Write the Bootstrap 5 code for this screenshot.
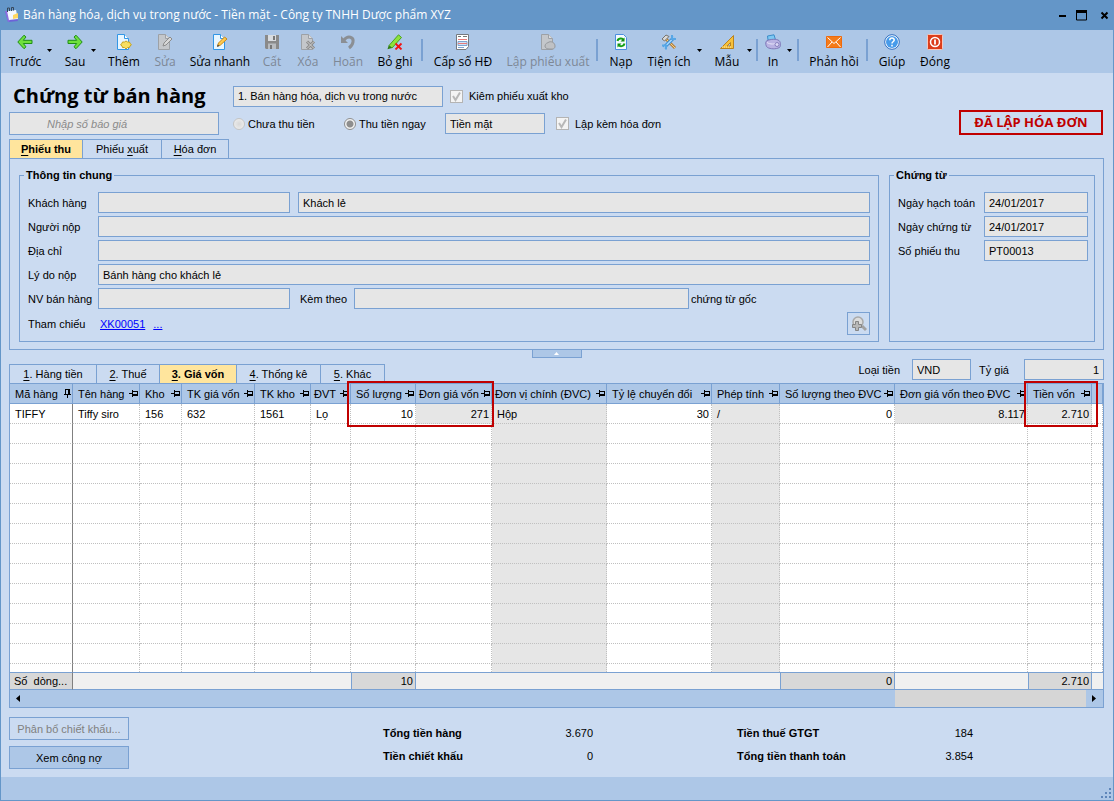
<!DOCTYPE html>
<html lang="vi">
<head>
<meta charset="utf-8">
<meta name="viewport" content="width=device-width, initial-scale=1">
<title>Bán hàng hóa, dịch vụ trong nước</title>
<link rel="stylesheet" href="https://cdn.jsdelivr.net/npm/bootstrap@5.3.0/dist/css/bootstrap.min.css">
<style>
:root { --line:#7aa1d2; --frame:#6496c8; --bar:#adc7e7; --page:#cbdbf1; --field:#e6e6e6; --mark-red:#c00000; --active:#ffe59d; }
body { background:var(--page); color:#000; font:11px/14px "Liberation Sans", Arial, sans-serif; }
.ui-font { font-family:"Open Sans", "Segoe UI", sans-serif; font-size:12px; line-height:16px; }
button, input, select { font:inherit; color:inherit; border-radius:0; }
.app-window { border:1px solid var(--frame); border-top:0; }
.title-bar { background:var(--frame); color:#fff; height:30px; padding:0 4px; }
.title-bar button { background:none; border:0; padding:0; display:block; color:#000; line-height:0; }
.tool-bar { background:var(--bar); height:43px; padding:4px 0 3px 2px; display:grid; align-items:start;
  grid-template-columns:44px 12px 32px 12px 42px 40px 70px 34px 38px 42px 52px 2px 80px 90px 8px 40px 56px 10px 40px 8px 4px 28px 6px 10px 62px 4px 46px 40px; }
.tool-bar button { background:none; border:0; padding:0; display:flex; flex-direction:column; align-items:center; gap:4px; white-space:nowrap; color:#000; min-width:0; }
.tool-bar button:disabled { color:#7d8896; }
.tool-bar .drop { display:block; padding-top:15px; line-height:0; text-align:left; }
.tool-bar i { width:2px; height:22px; margin-top:5px; background:var(--line); justify-self:center; }
main { padding:12px 9px 8px 8px; }
.doc-title { font:700 20px/22px "Open Sans", "Segoe UI", sans-serif; padding-left:4px; margin:0; white-space:nowrap; }
.head-row { display:grid; align-items:center; grid-template-columns:224px 210px auto; }
.head-row.second { grid-template-columns:224px 111px 101px 100px auto; padding-top:5px; }
.head-row label { display:flex; align-items:center; white-space:nowrap; }
.pick-tick { gap:6px; padding-left:7px; }
.second .pick-tick { padding-left:11px; }
.pick-dot { gap:3px; }
.field { background:var(--field); border:1px solid var(--line); height:21px; padding:0 4px; min-width:0; appearance:none; outline:0; display:block; opacity:1; color:#000; }
.field.flex-fill { width:0; }
.field.quote { height:23px; width:210px; padding-left:37px; font-style:italic; }
.field.quote::placeholder { color:#8a8a8a; opacity:1; }
.tick, .dot { appearance:none; width:13px; height:13px; margin:0; border:1px solid #b4b4b4; background:#f4f4f4; }
.tick:checked { background:#f4f4f4 url("data:image/svg+xml,%3Csvg xmlns='http://www.w3.org/2000/svg' viewBox='0 0 11 11'%3E%3Cpath d='M2 5l2.500 4L9 1.500' fill='none' stroke='%23b8b8b8' stroke-width='2'/%3E%3C/svg%3E") center/11px no-repeat; }
.dot { width:12px; height:12px; border-radius:50%; border-color:#c4c4c4; background:radial-gradient(#d8d8d8,#f2f2f2); }
.dot:checked { border-color:#8f8f8f; background:radial-gradient(circle,#8e8e8e 0 3px,#f2f2f2 4px); }
.stamp { border:2px solid var(--mark-red); color:var(--mark-red); font:700 13px/21px "Open Sans", "Segoe UI", sans-serif; width:144px; text-align:center; white-space:nowrap; margin:25px 1px 0 0; }
.tab-strip button { background:var(--page); border:1px solid var(--line); border-bottom:0; border-left-width:0; padding:0; height:19px; color:#000; }
.tab-strip button:first-child { border-left-width:1px; }
.tab-strip .active { background:var(--active); font-weight:700; }
.tab-strip u { text-underline-offset:2px; }
.t64 { width:64px; } .t67 { width:67px; } .t74 { width:74px; } .t77 { width:77px; } .t79 { width:79px; } .t84 { width:84px; } .t88 { width:88px; } .t63 { width:63px; }
.panel { border:1px solid var(--line); padding:9px 8px 7px 9px; gap:10px; }
fieldset { border:1px solid var(--line); padding:9px 8px 6px; }
fieldset legend { float:none; width:auto; font:inherit; font-weight:700; line-height:14px; padding:0 2px; margin:0 0 1px -4px; }
.group-doc { flex:0 0 206px; padding-right:6px; }
.f-lines { display:grid; gap:3px; }
.f-line { display:flex; align-items:center; min-height:21px; white-space:nowrap; }
.f-line > label:first-child, .f-line > .lead-text { width:70px; flex:none; }
.f-line > .lead-text { width:72px; }
.group-doc .f-line > label:first-child { width:86px; }
.w-code { width:192px; flex:none; }
.with-label { width:64px; padding-left:10px; flex:none; }
.after-label { width:181px; padding-left:2px; flex:none; }
.link-blue { color:#00f; }
.find-btn { width:23px; height:23px; background:none; border:1px solid var(--line); padding:0; line-height:0; }
.fold { width:50px; height:8px; background:var(--bar); border:1px solid var(--line); border-top:0; padding:0; line-height:0; display:block; margin:0 auto; }
.money { padding:1px 0 3px; white-space:nowrap; }
.cur-w { width:59px; margin:0 8px 0 12px; }
.rate-w { width:80px; margin-left:15px; }
.grid-box { border:1px solid var(--line); background:#fff; }
.data-grid { table-layout:fixed; width:100%; border-collapse:separate; border-spacing:0; white-space:nowrap; }
.data-grid th, .data-grid td { padding:0 2px 0 5px; border-right:1px dotted #c0c0c0; border-bottom:1px dotted #c0c0c0; height:20px; overflow:hidden; }
.data-grid thead th { background:var(--bar); font-weight:400; border-right:1px solid var(--line); border-bottom:1px solid var(--line); padding-right:1px; position:relative; overflow:visible; }
.data-grid thead .tight { padding-left:3px; }
.data-grid .num { text-align:right; }
.data-grid .gray { background:var(--field); }
.data-grid tr > :first-child { border-right:1px solid #808080; }
.data-grid thead tr > :first-child { border-right-color:var(--line); }
.data-grid .stub td { height:8px; border-bottom:0; }
.data-grid tfoot td { height:18px; background:#f0f0f0; border:0; border-top:1px solid var(--line); border-bottom:1px solid var(--line); padding:0 2px; }
.data-grid tfoot .sum { background:#d8d8d8; border-right:1px solid var(--line); border-left:1px solid var(--line); }
.data-grid tfoot tr > .count { border-left:0; border-right:1px solid #808080; white-space:pre; padding-left:4px; }
.red-box { position:absolute; top:-3px; left:-4px; height:46px; border:2px solid var(--mark-red); z-index:2; }
.red-wide { width:147px; } .red-slim { width:74px; }
.scroll-line { height:17px; background:var(--bar); display:flex; align-items:center; justify-content:space-between; padding:0 6px 0 5px; }
.scroll-line .track { flex:0 0 191px; align-self:stretch; background:#d6d6d6; margin:0 6px 0 auto; }
.foot-area { padding-top:9px; }
.foot-btns { gap:6px; }
.btn-flat { width:120px; height:23px; background:var(--bar); border:1px solid var(--line); padding:0; color:#000; }
.btn-flat:disabled { background:var(--page); color:#808080; }
.totals { display:grid; grid-template-columns:150px 60px 320px 60px; row-gap:9px; align-content:start; margin-left:254px; padding-top:9px; flex:none; }
.totals dt, .totals dd { margin:0; white-space:nowrap; }
.totals dd { text-align:right; }
.totals .far { padding-left:144px; }
.status-bar { background:var(--bar); height:23px; padding:0 1px 1px; }
</style>
</head>
<body>
<svg width="0" height="0" class="position-absolute" aria-hidden="true">
  <symbol id="pin" viewBox="0 0 9 7"><path d="M0 3.500h3M3.500 0v7M8.500 1v5M4 1.500h4.500" stroke="#000" fill="none"/><path d="M4 4h5v2H4z"/></symbol>
  <symbol id="pin-down" viewBox="0 0 7 9"><path d="M1 .5h5M1.500 1v5M0 5.500h7M3.500 6v3" stroke="#000" fill="none"/><path d="M4 0h2v6H4z"/></symbol>
  <symbol id="caret" viewBox="0 0 5 3"><path d="M0 0h5L2.500 3z"/></symbol>
  <symbol id="sheet-blue" viewBox="0 0 16 16"><path d="M1.500.5h7l4 4v11h-11z" fill="#e8f6ff" stroke="#3296e6"/><path d="M8.500.5v4h4" fill="#fff" stroke="#3296e6"/></symbol>
  <symbol id="sheet-gray" viewBox="0 0 16 16"><path d="M1.500.5h7l4 4v11h-11z" fill="#c4c7cb" stroke="#9da1a6"/><path d="M8.500.5v4h4" fill="#dcdcdc" stroke="#9da1a6"/></symbol>
</svg>

<div class="app-window d-flex flex-column min-vh-100">
  <header class="title-bar ui-font d-flex align-items-center">
    <svg width="14" height="16" viewBox="0 0 14 16" class="me-1" aria-hidden="true"><path d="M0 4l3 11 10-1-1-3z" fill="#6d62d8"/><path d="M0 4l3 11 2-1L3 4z" fill="#8a6fe0"/><path d="M2 4l9-1 2 9-9 1z" fill="#f3f8ff"/><path d="M8 8l5-2v5l-5 1z" fill="#ffd860"/><path d="M2.500 5V1h2v3M6.500 4V.5h2v3" fill="none" stroke="#37475a"/></svg>
    <span class="me-auto">Bán hàng hóa, dịch vụ trong nước - Tiền mặt - Công ty TNHH Dược phẩm XYZ</span>
    <div class="d-flex align-items-center gap-2">
      <button type="button" aria-label="Thu nhỏ"><svg width="9" height="11" viewBox="0 0 9 11"><path d="M1 5h7v2H1z"/></svg></button>
      <button type="button" aria-label="Phóng to"><svg width="13" height="11" viewBox="0 0 13 11"><path d="M1.500 1v9h10V1z" fill="none" stroke="#000"/><path d="M1 0h11v3H1z"/></svg></button>
      <button type="button" aria-label="Đóng cửa sổ" class="ms-1"><svg width="9" height="11" viewBox="0 0 9 11"><path d="M1.500 2.500l6 6m0-6l-6 6" stroke="#000" stroke-width="2"/></svg></button>
    </div>
  </header>

  <nav class="tool-bar ui-font" aria-label="Công cụ">
    <button type="button"><svg width="16" height="16" viewBox="0 0 16 16"><path d="M7 1.200L9 3 6.300 6.300H15v3.200H6.300L9 12.800 7 14.700.8 8z" fill="#6fe03c" stroke="#1f8f17"/></svg>Trước</button>
    <button type="button" class="drop" aria-label="Danh sách trước"><svg width="5" height="3"><use href="#caret"/></svg></button>
    <button type="button"><svg width="16" height="16" viewBox="0 0 16 16"><path d="M9 1.200L7 3l2.700 3.300H1v3.200h8.700L7 12.800l2 1.900L15.200 8z" fill="#6fe03c" stroke="#1f8f17"/></svg>Sau</button>
    <button type="button" class="drop" aria-label="Danh sách sau"><svg width="5" height="3"><use href="#caret"/></svg></button>
    <button type="button"><svg width="16" height="16" viewBox="0 0 16 16"><use href="#sheet-blue"/><path d="M10 7l1.500 1h2l.5 1.500 1.500 1.200-1.500 1.300-.5 1.500h-2L10 15l-1.500-1.500h-2L6 12l-1.500-1.300L6 9.500 6.500 8h2z" fill="#f7df62" stroke="#c8a31c"/></svg>Thêm</button>
    <button type="button" disabled><svg width="16" height="16" viewBox="0 0 16 16"><use href="#sheet-gray"/><path d="M6 12l1-3 6-6 2 2-6 6z" fill="#d8d8d8" stroke="#8c8c8c"/></svg>Sửa</button>
    <button type="button"><svg width="16" height="16" viewBox="0 0 16 16"><use href="#sheet-blue"/><path d="M5.500 12l1-3 6-6 2.500 2-6.500 6z" fill="#ffc94d" stroke="#c98a1a"/><path d="M5 13l.8-2.500L7.500 12z" fill="#444"/></svg>Sửa nhanh</button>
    <button type="button" disabled><svg width="16" height="16" viewBox="0 0 16 16"><path d="M1 1h14v14H2l-1-1z" fill="#8a8a8a"/><path d="M4 1h8v6H4z" fill="#d9dce0"/><path d="M4 9.500h8V15H4z" fill="#b9bcc0"/><path d="M6 11h2v4H6zM9 2h2v4H9z" fill="#777"/></svg>Cất</button>
    <button type="button" disabled><svg width="16" height="16" viewBox="0 0 16 16"><use href="#sheet-gray"/><path d="M7 7.500l7 7m0-7l-7 7" stroke="#8a8a8a" stroke-width="3"/><path d="M7 7.500l7 7m0-7l-7 7" stroke="#d2d2d2"/></svg>Xóa</button>
    <button type="button" disabled><svg width="16" height="16" viewBox="0 0 16 16"><path d="M4 6c4-5 10-3 9 2-.5 3-2 4.500-4 6" fill="none" stroke="#8b8f94" stroke-width="3"/><path d="M1 2v7h7z" fill="#8b8f94"/></svg>Hoãn</button>
    <button type="button"><svg width="16" height="16" viewBox="0 0 16 16"><path d="M2 11.500L11.500.8l3 2.700L5 14z" fill="#8ee23c" stroke="#4ba31f"/><path d="M.5 15.200l1.200-4L5 14z" fill="#2f7d16"/><path d="M8.500 9.500l6 6m0-6l-6 6" stroke="#f01414" stroke-width="1.800"/></svg>Bỏ ghi</button>
    <i></i>
    <button type="button"><svg width="16" height="16" viewBox="0 0 16 16"><path d="M1.500.5h12v12l-2.500 3H1.500z" fill="#fff" stroke="#75797f"/><path d="M3 2.500h3M8 2.500h4" stroke="#777"/><path d="M3 5.500h9" stroke="#e87a7a"/><path d="M3 7.500h9v4H3z" fill="#cfe4f7" stroke="#7fa3cf"/><path d="M3 9.500h9" stroke="#e87a7a"/><path d="M3 13.500h6" stroke="#7fa3cf"/></svg>Cấp số HĐ</button>
    <button type="button" disabled><svg width="16" height="16" viewBox="0 0 16 16"><use href="#sheet-gray"/><path d="M5 12c0-3 3-3 4-4 3-1 6 1 6 4s-2 3-4 3-6 0-6-3z" fill="#bfc1c4" stroke="#96999d"/></svg>Lập phiếu xuất</button>
    <i></i>
    <button type="button"><svg width="16" height="16" viewBox="0 0 16 16"><path d="M2.500.5h8l3 3v12h-11z" fill="#f4fbff" stroke="#4b8ee0"/><path d="M4.500 7c.5-3 5-3.500 6-1" fill="none" stroke="#16a016" stroke-width="2"/><path d="M11.500 3.500v4h-4zM4.500 13.500v-4h4z" fill="#118c11"/><path d="M11.500 9.500c-.5 3-4.500 3.500-6 1.500" fill="none" stroke="#16a016" stroke-width="2"/></svg>Nạp</button>
    <button type="button"><svg width="16" height="16" viewBox="0 0 16 16"><path d="M4 4l10 10" stroke="#b8823a" stroke-width="3"/><path d="M5 5l9 9" stroke="#f3d18e"/><path d="M1 5l4-4 3 1.500L3.500 7z" fill="#d9d9d9" stroke="#76746e"/><path d="M3 13.500L13 3.500" stroke="#3d8fd6" stroke-width="3.500"/><path d="M3 13.500L13 3.500" stroke="#a9dbff" stroke-width="1.500"/><path d="M11 1v4h4M1 11.500h4v4" fill="none" stroke="#58a7e6" stroke-width="2"/></svg>Tiện ích</button>
    <button type="button" class="drop" aria-label="Danh sách tiện ích"><svg width="5" height="3"><use href="#caret"/></svg></button>
    <button type="button"><svg width="16" height="16" viewBox="0 0 16 16"><path d="M14.500 1.500v13h-13z" fill="#f6c13c" stroke="#b9821f"/><path d="M11.500 8.500v3.500H8z" fill="#adc7e7" stroke="#b9821f"/><path d="M3 13h10" stroke="#fde9a8" stroke-dasharray="1 1"/></svg>Mẫu</button>
    <button type="button" class="drop" aria-label="Danh sách mẫu"><svg width="5" height="3"><use href="#caret"/></svg></button>
    <i></i>
    <button type="button"><svg width="16" height="16" viewBox="0 0 16 16"><path d="M3 6L2.500 2 9 .8l1.500 5z" fill="#7ec8f2" stroke="#3c8cc8"/><path d="M1 7.500c2-2 9-3 12-1.500 3 1 3 6 1.500 7.500-4 2-9 1.500-12 0C.5 12 .5 9 1 7.500z" fill="#b9b3e3" stroke="#7f79b8"/><path d="M2 8.500c3 2 8 2 10 0" fill="none" stroke="#e9e6fa"/><circle cx="12" cy="10.500" r="2" fill="#dcd8f5" stroke="#8580bd"/></svg>In</button>
    <button type="button" class="drop" aria-label="Danh sách in"><svg width="5" height="3"><use href="#caret"/></svg></button>
    <i></i>
    <button type="button"><svg width="16" height="16" viewBox="0 0 16 16"><path d="M.5 2.500h15v11H.5z" fill="#f47b1a" stroke="#ef6a0c"/><path d="M1.500 3.500L8 9.500l6.500-6M1.500 13L6 8m8.500 5L10 8" fill="none" stroke="#fff"/></svg>Phản hồi</button>
    <i></i>
    <button type="button"><svg width="16" height="16" viewBox="0 0 16 16"><circle cx="8" cy="8" r="7.300" fill="#fff" stroke="#2c6cc0"/><circle cx="8" cy="8" r="6" fill="#479bea"/><path d="M5.800 6.200c.2-3 4.600-2.700 4.400 0-.2 1.600-2.200 1.600-2.200 3.200M8 10.800v1.700" fill="none" stroke="#fff" stroke-width="1.500"/></svg>Giúp</button>
    <button type="button"><svg width="16" height="16" viewBox="0 0 16 16"><rect x=".5" y=".5" width="15" height="15" rx="1" fill="#dc3d1b" stroke="#f7c7bb"/><circle cx="8" cy="8" r="4.500" fill="none" stroke="#fff" stroke-width="1.500"/><path d="M8 5.500v5" stroke="#fff" stroke-width="1.800"/></svg>Đóng</button>
  </nav>

  <main class="flex-grow-1 d-flex flex-column">
    <div class="d-flex align-items-start">
      <div class="flex-grow-1">
        <div class="head-row">
          <h1 class="doc-title">Chứng từ bán hàng</h1>
          <select class="field" aria-label="Loại chứng từ" disabled><option>1. Bán hàng hóa, dịch vụ trong nước</option></select>
          <label class="pick-tick"><input type="checkbox" class="tick" checked disabled>Kiêm phiếu xuất kho</label>
        </div>
        <div class="head-row second">
          <input type="text" class="field quote" placeholder="Nhập số báo giá" aria-label="Số báo giá" readonly>
          <label class="pick-dot"><input type="radio" name="pay" class="dot" disabled>Chưa thu tiền</label>
          <label class="pick-dot"><input type="radio" name="pay" class="dot" checked disabled>Thu tiền ngay</label>
          <select class="field" aria-label="Phương thức" disabled><option>Tiền mặt</option></select>
          <label class="pick-tick"><input type="checkbox" class="tick" checked disabled>Lập kèm hóa đơn</label>
        </div>
      </div>
      <div class="stamp">ĐÃ LẬP HÓA ĐƠN</div>
    </div>

    <div class="tab-strip d-flex pt-1">
      <button type="button" class="active t74"><u>P</u>hiếu thu</button>
      <button type="button" class="t79">Phiếu <u>x</u>uất</button>
      <button type="button" class="t67"><u>H</u>óa đơn</button>
    </div>
    <section class="panel d-flex">
      <fieldset class="flex-grow-1">
        <legend>Thông tin chung</legend>
        <div class="f-lines">
          <div class="f-line"><label for="kh">Khách hàng</label><input id="kh" class="field w-code" readonly><input class="field flex-fill ms-2" value="Khách lẻ" aria-label="Tên khách hàng" readonly></div>
          <div class="f-line"><label for="nn">Người nộp</label><input id="nn" class="field flex-fill" readonly></div>
          <div class="f-line"><label for="dc">Địa chỉ</label><input id="dc" class="field flex-fill" readonly></div>
          <div class="f-line"><label for="ld">Lý do nộp</label><input id="ld" class="field flex-fill" value="Bánh hàng cho khách lẻ" readonly></div>
          <div class="f-line"><label for="nv">NV bán hàng</label><input id="nv" class="field w-code" readonly><label for="kt" class="with-label">Kèm theo</label><input id="kt" class="field flex-fill" readonly><label for="kt" class="after-label">chứng từ gốc</label></div>
          <div class="f-line"><span class="lead-text">Tham chiếu</span><a href="#" class="link-blue">XK00051</a><a href="#" class="link-blue ms-2">...</a>
            <button type="button" class="find-btn ms-auto" aria-label="Tìm chứng từ"><svg width="16" height="16" viewBox="0 0 16 16"><circle cx="7" cy="6" r="5" fill="#dcdcdc" stroke="#a9a9a9" stroke-width="1.500"/><path d="M11 10l4 4" stroke="#a2a2a2" stroke-width="3"/><path d="M4.500 5.500h3v3h3v3h-3v3h-3v-3h-3v-3h3z" fill="#b8b8b8" stroke="#858585"/></svg></button></div>
        </div>
      </fieldset>
      <fieldset class="group-doc">
        <legend>Chứng từ</legend>
        <div class="f-lines">
          <div class="f-line"><label for="nh">Ngày hạch toán</label><input id="nh" class="field flex-fill" value="24/01/2017" readonly></div>
          <div class="f-line"><label for="nc">Ngày chứng từ</label><input id="nc" class="field flex-fill" value="24/01/2017" readonly></div>
          <div class="f-line"><label for="sp">Số phiếu thu</label><input id="sp" class="field flex-fill" value="PT00013" readonly></div>
        </div>
      </fieldset>
    </section>
    <button type="button" class="fold" aria-label="Thu gọn"><svg width="5" height="3" viewBox="0 0 5 3"><path d="M0 3h5L2.500 0z" fill="#fff"/></svg></button>

    <div class="d-flex align-items-end">
      <div class="tab-strip d-flex me-auto">
        <button type="button" class="t88"><u>1</u>. Hàng tiền</button>
        <button type="button" class="t63"><u>2</u>. Thuế</button>
        <button type="button" class="active t77"><u>3</u>. Giá vốn</button>
        <button type="button" class="t84"><u>4</u>. Thống kê</button>
        <button type="button" class="t64"><u>5</u>. Khác</button>
      </div>
      <div class="money d-flex align-items-center">
        <label for="cur">Loại tiền</label><select id="cur" class="field cur-w" disabled><option>VND</option></select>
        <label for="rate">Tỷ giá</label><input id="rate" class="field rate-w text-end" value="1" readonly>
      </div>
    </div>
    <div class="grid-box">
      <table class="data-grid">
        <colgroup><col style="width:63px"><col style="width:67px"><col style="width:42px"><col style="width:73px"><col style="width:56px"><col style="width:40px"><col style="width:65px"><col style="width:76px"><col style="width:115px"><col style="width:105px"><col style="width:68px"><col style="width:115px"><col style="width:133px"><col style="width:64px"><col></colgroup>
        <thead><tr id="heads"></tr></thead>
        <tbody id="lines"></tbody>
        <tfoot><tr>
          <td class="sum count">Số  dòng...</td><td colspan="5"></td><td class="sum num">10</td><td colspan="4"></td><td class="sum num">0</td><td></td><td class="sum num">2.710</td><td></td>
        </tr></tfoot>
      </table>
      <div class="scroll-line" aria-hidden="true"><svg width="5" height="7" viewBox="0 0 5 7"><path d="M5 0v7L1 3.500z"/></svg><span class="track"></span><svg width="5" height="7" viewBox="0 0 5 7"><path d="M0 0v7l4-3.500z"/></svg></div>
    </div>

    <div class="foot-area d-flex">
      <div class="d-flex flex-column foot-btns">
        <button type="button" class="btn-flat" disabled>Phân bổ chiết khấu...</button>
        <button type="button" class="btn-flat">Xem công nợ</button>
      </div>
      <dl class="totals mb-0">
        <dt>Tổng tiền hàng</dt><dd>3.670</dd><dt class="far">Tiền thuế GTGT</dt><dd>184</dd>
        <dt>Tiền chiết khấu</dt><dd>0</dd><dt class="far">Tổng tiền thanh toán</dt><dd>3.854</dd>
      </dl>
    </div>
  </main>
  <footer class="status-bar d-flex justify-content-end align-items-end">
    <svg width="12" height="12" viewBox="0 0 12 12" aria-hidden="true"><path d="M9 1h2v2H9zM9 5h2v2H9zM5 5h2v2H5zM9 9h2v2H9zM5 9h2v2H5zM1 9h2v2H1z" fill="#5f86ba"/></svg>
  </footer>
</div>
<script src="https://cdn.jsdelivr.net/npm/bootstrap@5.3.0/dist/js/bootstrap.bundle.min.js"></script>
<script>
// name, value, options: n = numeric, g = gray column, f = gray only on filled row, t = tight heading
const columns = [
  ['Mã hàng','TIFFY',''],['Tên hàng','Tiffy siro',''],['Kho','156',''],['TK giá vốn','632',''],['TK kho','1561',''],
  ['ĐVT','Lọ','t'],['Số lượng','10','n'],['Đơn giá vốn','271','nft'],['Đơn vị chính (ĐVC)','Hộp','gt'],['Tỷ lệ chuyển đổi','30','n'],
  ['Phép tính','/','g'],['Số lượng theo ĐVC','0','n'],['Đơn giá vốn theo ĐVC','8.117','nf'],['Tiền vốn','2.710','nf'],['','','']
];
const boxes = {6:'red-wide', 13:'red-slim'};
document.getElementById('heads').innerHTML = columns.map(([name,,o],i) => {
  const pin = i === 0 ? '<svg width="7" height="9"><use href="#pin-down"/></svg>' : '<svg width="9" height="7"><use href="#pin"/></svg>';
  const box = boxes[i] ? `<div class="red-box ${boxes[i]}"></div>` : '';
  return `<th scope="col" class="${o.includes('t') ? 'tight' : ''}">${name ? `<div class="d-flex justify-content-between align-items-center">${name}${pin}</div>` : ''}${box}</th>`;
}).join('');
let rows = '';
for (let r = 0; r < 14; r++) {
  rows += `<tr class="${r === 13 ? 'stub' : ''}">` + columns.map(([,value,o]) => {
    const gray = o.includes('g') || (r === 0 && o.includes('f'));
    return `<td class="${gray ? 'gray ' : ''}${o.includes('n') ? 'num' : ''}">${r === 0 ? value : ''}</td>`;
  }).join('') + '</tr>';
}
document.getElementById('lines').innerHTML = rows;
</script>
</body>
</html>
